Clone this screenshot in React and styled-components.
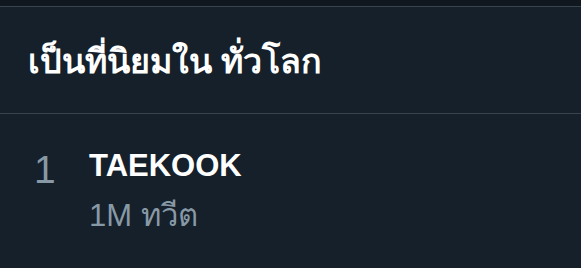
import React from "react";
import styled, { createGlobalStyle } from "styled-components";

const GlobalStyle = createGlobalStyle`
  html, body {
    margin: 0;
    padding: 0;
    background: #15202b;
  }
  body {
    font-family: "Liberation Sans", "Noto Sans", Arial, sans-serif;
    -webkit-font-smoothing: antialiased;
  }
`;

const Page = styled.div`
  width: 581px;
  height: 268px;
  overflow: hidden;
  background: #15202b;
  display: flex;
  flex-direction: column;
`;

const TopStrip = styled.div`
  height: 6px;
  background: #10171e;
  border-bottom: 1px solid #38444d;
`;

const Header = styled.div`
  height: 106px;
  display: flex;
  align-items: center;
  padding: 0 28px;
  border-bottom: 1px solid #38444d;
`;

const Title = styled.h2`
  margin: 0;
  color: #ffffff;
  font-family: "Noto Sans", sans-serif;
  font-size: 34px;
  font-weight: 700;
  line-height: 1;
`;

const TrendRow = styled.div`
  display: flex;
  padding: 34px 28px 0 34px;
`;

const Rank = styled.div`
  width: 55px;
  margin-top: 4px;
  color: #8899a6;
  font-size: 39px;
  line-height: 36px;
`;

const TrendBody = styled.div`
  display: flex;
  flex-direction: column;
  gap: 14px;
`;

const TrendName = styled.div`
  color: #ffffff;
  font-size: 31px;
  font-weight: 700;
  line-height: 36px;
`;

const TrendMeta = styled.div`
  color: #8899a6;
  font-size: 31px;
  line-height: 36px;
`;

export default function App() {
  return (
    <>
      <GlobalStyle />
      <Page>
        <TopStrip />
        <Header>
          <Title>เป็นที่นิยมใน ทั่วโลก</Title>
        </Header>
        <TrendRow>
          <Rank>1</Rank>
          <TrendBody>
            <TrendName>TAEKOOK</TrendName>
            <TrendMeta>1M ทวีต</TrendMeta>
          </TrendBody>
        </TrendRow>
      </Page>
    </>
  );
}
